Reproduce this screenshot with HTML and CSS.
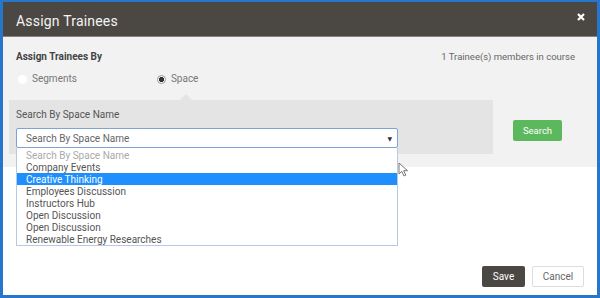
FILE: index.html
```html
<!DOCTYPE html>
<html>
<head>
<meta charset="utf-8" />
<title>Assign Trainees</title>
<link rel="stylesheet" href="styles.css">
</head>
<body>
<div class="modal">
	<div class="modal_head">
		<h1>Assign Trainees</h1>
		<svg class="close" width="8" height="8" viewBox="0 0 8 8"><path d="M1 1L7 7M7 1L1 7" stroke="#fff" stroke-width="2.2"/></svg>
	</div>
	<div class="assign_by">
		<div class="by_head">
			<span class="by_title">Assign Trainees By</span>
			<span class="count">1 Trainee(s) members in course</span>
		</div>
		<div class="radios">
			<label class="radio"><span class="dot"></span>Segments</label>
			<label class="radio on"><span class="dot"></span>Space</label>
		</div>
		<div class="search_row">
			<div class="panel">
				<div class="panel_label">Search By Space Name</div>
				<div class="select">
					<span>Search By Space Name</span>
					<span class="arrow">&#9660;</span>
					<ul class="options">
						<li class="placeholder">Search By Space Name</li>
						<li>Company Events</li>
						<li class="hover">Creative Thinking</li>
						<li>Employees Discussion</li>
						<li>Instructors Hub</li>
						<li>Open Discussion</li>
						<li>Open Discussion</li>
						<li>Renewable Energy Researches</li>
					</ul>
					<svg class="cursor" width="11" height="15" viewBox="0 0 11 15"><path d="M1 1L1 12L3.8 9.4L6 14L7.8 13.2L5.7 8.7L9.5 8.7Z" fill="#fff" stroke="#777" stroke-width="1"/></svg>
				</div>
			</div>
			<button class="btn_search">Search</button>
		</div>
	</div>
	<div class="modal_foot">
		<button class="btn_save">Save</button>
		<button class="btn_cancel">Cancel</button>
	</div>
</div>
</body>
</html>
```

FILE: styles.css
```css
body{margin:0;font:normal 10px/1.2 Roboto, "DejaVu Sans", sans-serif;color:#555;}
h1,ul,li{margin:0;padding:0;}
ul{list-style:none;}
button{font-family:Roboto, "DejaVu Sans", sans-serif;cursor:pointer;}
.modal{width:600px;height:298px;box-sizing:border-box;border:3px solid #2676c9;border-top-width:2px;display:flex;flex-direction:column;background:#fff;}
.modal_head{height:35px;box-sizing:border-box;display:flex;align-items:center;justify-content:space-between;padding:5px 13px 0 13px;background:#4b4844;border-bottom:1px solid #85837f;}
.modal_head h1{font-size:14px;font-weight:normal;color:#f4f4f4;letter-spacing:0.2px;}
.close{margin-right:-1px;margin-top:-9px;}
.assign_by{height:130px;box-sizing:border-box;background:#f2f2f2;padding:14px 6px 0 6px;}
.by_head{display:flex;justify-content:space-between;padding:0 16px 0 7px;line-height:12px;}
.by_title{font-weight:bold;color:#444;}
.count{font-size:9.5px;color:#666;}
.radios{display:flex;gap:80px;margin-top:10px;padding-left:9px;line-height:12px;color:#777;}
.radio{display:flex;align-items:center;gap:5px;}
.dot{width:9px;height:9px;border-radius:50%;background:#fff;box-sizing:border-box;}
.radio.on .dot{border:1px solid #999;background:radial-gradient(circle,#333 0 2.4px,#fff 2.9px);}
.search_row{display:flex;gap:20px;margin-top:15px;}
.panel{position:relative;width:484px;box-sizing:border-box;background:#e4e4e4;padding:9px 95px 6px 7px;}
.panel:before{content:"";position:absolute;left:171px;top:-6px;border:6px solid transparent;border-top:0;border-bottom-color:#e4e4e4;}
.panel_label{line-height:12px;color:#555;}
.select{position:relative;margin-top:7px;height:20px;box-sizing:border-box;border:1px solid #7fa3d6;border-radius:2px;background:#fff;display:flex;align-items:center;justify-content:space-between;padding:1px 5px 0 9px;color:#666;}
.arrow{font-size:6px;color:#333;}
.options{position:absolute;left:-1px;right:-1px;top:19px;background:#fff;border:1px solid #b9c9e3;border-top:0;padding-top:1px;}
.options li{height:12px;line-height:13px;padding-left:9px;color:#555;}
.options .placeholder{color:#aaa;}
.options .hover{background:#1e8ffd;color:#fff;}
.cursor{position:absolute;right:-12px;top:33px;}
.btn_search{align-self:flex-start;margin-top:20px;width:49px;height:21px;border:0;border-radius:2px;background:#5cb85c;color:#fff;font-size:9.5px;}
.modal_foot{flex:1;display:flex;justify-content:flex-end;align-items:flex-end;gap:7px;padding:0 13px 8px 0;}
.btn_save{width:43px;height:21px;border:0;border-radius:2px;background:#4b4844;color:#fff;font-size:10px;}
.btn_cancel{width:52px;height:21px;border:1px solid #ddd;border-radius:2px;background:#fff;color:#666;font-size:10px;}
```
